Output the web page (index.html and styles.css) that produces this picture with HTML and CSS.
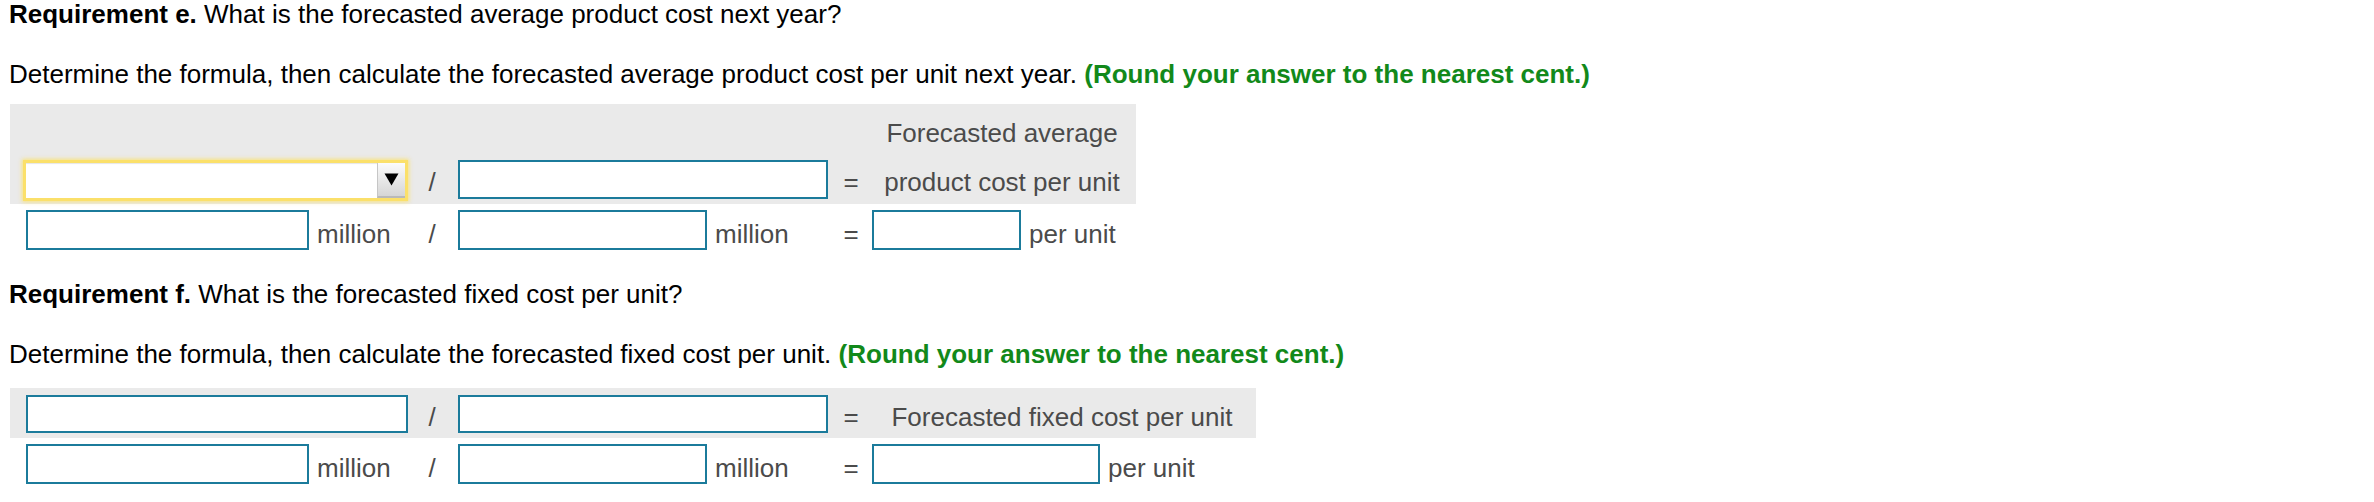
FILE: index.html
```html
<!DOCTYPE html>
<html lang="en">
<head>
<meta charset="utf-8">
<title>Requirements e and f</title>
<link rel="stylesheet" href="styles.css">
</head>
<body>
<section class="req">
  <p class="q"><b>Requirement e.</b> What is the forecasted average product cost next year?</p>
  <p class="inst">Determine the formula, then calculate the forecasted average product cost per unit next year. <span class="hint">(Round your answer to the nearest cent.)</span></p>
  <div class="formula">
    <div class="shade shade-e">
      <div class="row row-head">
        <div class="cell"></div>
        <div class="cell"></div>
        <div class="cell"></div>
        <div class="cell"></div>
        <div class="cell label">Forecasted average</div>
      </div>
      <div class="row row-main">
        <div class="cell">
          <div class="select">
            <span class="arrow"><svg width="15" height="13" viewBox="0 0 15 13"><polygon points="0.5,0.5 14.5,0.5 7.5,12.5" fill="#000"/></svg></span>
          </div>
        </div>
        <div class="cell op">/</div>
        <div class="cell c3"><input class="inp w370" type="text"></div>
        <div class="cell op">=</div>
        <div class="cell label">product cost per unit</div>
      </div>
    </div>
    <div class="row row-calc">
      <div class="cell c1"><input class="inp w283" type="text"><span class="unit">million</span></div>
      <div class="cell op">/</div>
      <div class="cell c3"><input class="inp w249" type="text"><span class="unit">million</span></div>
      <div class="cell op">=</div>
      <div class="cell c5"><input class="inp w149" type="text"><span class="unit">per unit</span></div>
    </div>
  </div>

  <p class="q q-f"><b>Requirement f.</b> What is the forecasted fixed cost per unit?</p>
  <p class="inst">Determine the formula, then calculate the forecasted fixed cost per unit. <span class="hint">(Round your answer to the nearest cent.)</span></p>
  <div class="formula formula-f">
    <div class="shade shade-f">
      <div class="row row-f1">
        <div class="cell c1"><input class="inp w382 short" type="text"></div>
        <div class="cell op">/</div>
        <div class="cell c3"><input class="inp w370 short" type="text"></div>
        <div class="cell op">=</div>
        <div class="cell label">Forecasted fixed cost per unit</div>
      </div>
    </div>
    <div class="row row-calc">
      <div class="cell c1"><input class="inp w283" type="text"><span class="unit">million</span></div>
      <div class="cell op">/</div>
      <div class="cell c3"><input class="inp w249" type="text"><span class="unit">million</span></div>
      <div class="cell op">=</div>
      <div class="cell c5"><input class="inp w228" type="text"><span class="unit">per unit</span></div>
    </div>
  </div>
</section>
</body>
</html>
```

FILE: styles.css
```css
html, body {
  margin: 0;
  padding: 0;
  background: #ffffff;
}

body {
  font-family: "Liberation Sans", Arial, Helvetica, sans-serif;
  font-size: 26px;
  color: #000000;
}

p {
  margin: 0;
  padding-left: 9px;
  line-height: 28px;
}

.q b {
  font-weight: bold;
}

.inst {
  margin-top: 32px;
}

.q-f {
  margin-top: 30px;
}

.hint {
  color: #12891a;
  font-weight: bold;
}

.formula {
  margin-top: 16px;
  margin-left: 10px;
}

.formula-f {
  margin-top: 20px;
}

.shade {
  background: #eaeaea;
}

.shade-e {
  width: 1126px;
}

.shade-f {
  width: 1246px;
}

.row {
  display: grid;
  grid-template-columns: 404px 36px 390px 22px 1fr;
  align-items: start;
}

.cell {
  display: flex;
  align-items: flex-start;
  line-height: 28px;
  color: #4b4b4b;
  white-space: nowrap;
}

.op {
  justify-content: center;
}

.label {
  justify-content: center;
  padding-left: 6px;
}

.c1 .inp {
  margin-left: 16px;
}

.c3 .inp {
  margin-left: 8px;
}

.c5 .inp {
  margin-left: 10px;
}

.unit {
  margin-left: 8px;
}

/* section e, header row of the shaded area */
.row-head {
  height: 56px;
}

.row-head .label {
  padding-top: 15px;
}

/* section e, formula row */
.row-main {
  height: 44px;
}

.row-main .op,
.row-main .label {
  padding-top: 8px;
}

/* second (calculation) row */
.row-calc {
  height: 46px;
}

.row-calc .inp {
  margin-top: 6px;
}

.row-calc .op,
.row-calc .unit {
  padding-top: 16px;
}

/* section f, formula row */
.row-f1 {
  height: 50px;
}

.row-f1 .inp {
  margin-top: 7px;
}

.row-f1 .op,
.row-f1 .label {
  padding-top: 15px;
}

.inp {
  box-sizing: border-box;
  height: 40px;
  margin: 0;
  padding: 0;
  border: 2px solid #1b7b9b;
  border-radius: 0;
  background: #ffffff;
  font: inherit;
  outline: none;
}

.inp.short {
  height: 38px;
}

.row-main .inp {
  height: 39px;
}

.w149 { width: 149px; }
.w228 { width: 228px; }
.w249 { width: 249px; }
.w283 { width: 283px; }
.w370 { width: 370px; }
.w382 { width: 382px; }

.select {
  box-sizing: border-box;
  width: 385px;
  height: 41px;
  margin-left: 13px;
  border: 3px solid #fbe06a;
  background: #ffffff;
  box-shadow: 0 0 4px 1px rgba(251, 224, 106, 0.85), inset 0 2px 1px -1px #e6e6e6;
  display: flex;
  justify-content: flex-end;
}

.arrow {
  box-sizing: border-box;
  width: 28px;
  height: 100%;
  display: flex;
  align-items: center;
  justify-content: center;
  background: linear-gradient(#fbfbfb, #d6d6d6);
  border-left: 1px solid #c6c6c6;
  border-bottom: 2px solid #b9b9b9;
}

.arrow svg {
  display: block;
}
```
